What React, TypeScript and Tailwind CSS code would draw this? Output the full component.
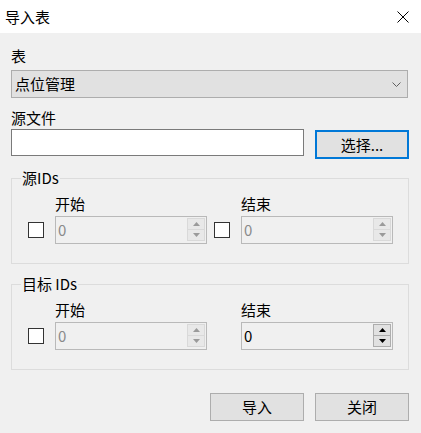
import React from "react";

function SpinBox({ enabled = false }: { enabled?: boolean }) {
  const btn = enabled
    ? "border-[#adadad] bg-[#e1e1e1]"
    : "border-[#d9d9d9] bg-[#e8e8e8]";
  const arrow = enabled ? "#000000" : "#9a9a9a";
  return (
    <div className="flex h-[28px] w-[152px] border border-[#b9b9b9] bg-[#f0f0f0]">
      <div
        className={`flex flex-1 items-center pl-[2px] text-[15px] leading-[20px] ${
          enabled ? "text-black" : "text-[#8a8a8a]"
        }`}
      >
        0
      </div>
      <div className="flex flex-col pt-[1px] pr-[1px]">
        <div className={`flex h-[12px] w-[18px] items-center justify-center border ${btn}`}>
          <svg width="7" height="4" viewBox="0 0 7 4">
            <polygon points="3.5,0 7,4 0,4" fill={arrow} />
          </svg>
        </div>
        <div className={`-mt-px flex h-[12px] w-[18px] items-center justify-center border ${btn}`}>
          <svg width="7" height="4" viewBox="0 0 7 4">
            <polygon points="0,0 7,0 3.5,4" fill={arrow} />
          </svg>
        </div>
      </div>
    </div>
  );
}

function CheckBox() {
  return <div className="h-[16px] w-[16px] border border-[#333333] bg-white" />;
}

function IdGroup({ title, endEnabled = false, endCheck = true }: { title: string; endEnabled?: boolean; endCheck?: boolean }) {
  return (
    <div className="relative h-[86px] w-[398px] border border-[#dcdcdc] pt-[15px] pl-[16px]">
      <span className="absolute -top-[11px] left-[9px] bg-[#f0f0f0] px-px text-[15px] leading-[20px]">
        {title}
      </span>
      <div className="flex text-[15px] leading-[20px]">
        <span className="ml-[27px] w-[186px]">开始</span>
        <span>结束</span>
      </div>
      <div className="mt-[2px] flex items-center">
        <CheckBox />
        <div className="ml-[11px]">
          <SpinBox />
        </div>
        <div className="ml-[7px] w-[16px]">{endCheck && <CheckBox />}</div>
        <div className="ml-[11px]">
          <SpinBox enabled={endEnabled} />
        </div>
      </div>
    </div>
  );
}

export default function App() {
  return (
    <div className="flex h-[433px] w-[421px] flex-col bg-[#f0f0f0] font-['Noto_Sans_CJK_SC','Microsoft_YaHei',sans-serif] text-black">
      {/* Title bar */}
      <div className="flex h-[33px] items-center justify-between bg-white pl-[5px] pr-[12px]">
        <span className="text-[15px] leading-[20px]">导入表</span>
        <svg width="12" height="12" viewBox="0 0 12 12" className="mt-[1px]">
          <path d="M0.5 0.5 L11.5 11.5 M11.5 0.5 L0.5 11.5" stroke="#000" strokeWidth="1" />
        </svg>
      </div>

      <div className="flex flex-col pl-[11px] pr-[12px]">
        <span className="mt-[13px] text-[15px] leading-[20px]">表</span>
        <div className="mt-[4px] flex h-[28px] w-[397px] items-center justify-between border border-[#adadad] bg-[#e1e1e1] pl-[3px] pr-[6px]">
          <span className="text-[15px] leading-[20px]">点位管理</span>
          <svg width="9" height="5" viewBox="0 0 9 5">
            <polyline points="0.5,0.5 4.5,4.5 8.5,0.5" fill="none" stroke="#606060" strokeWidth="1" />
          </svg>
        </div>

        <span className="mt-[10px] text-[15px] leading-[20px]">源文件</span>
        <div className="mt-[1px] flex h-[30px] items-start gap-[11px]">
          <div className="h-[27px] w-[293px] border border-[#7a7a7a] bg-white" />
          <button className="mt-[1px] flex h-[29px] w-[94px] items-center justify-center border-2 border-[#0078d7] bg-[#e1e1e1] text-[15px] leading-[20px]">
            选择...
          </button>
        </div>

        <div className="mt-[19px]">
          <IdGroup title="源IDs" />
        </div>
        <div className="mt-[20px]">
          <IdGroup title="目标 IDs" endEnabled endCheck={false} />
        </div>

        <div className="mt-[23px] flex justify-end gap-[11px]">
          <button className="h-[28px] w-[94px] border border-[#adadad] bg-[#e1e1e1] text-[15px] leading-[20px]">
            导入
          </button>
          <button className="h-[28px] w-[94px] border border-[#adadad] bg-[#e1e1e1] text-[15px] leading-[20px]">
            关闭
          </button>
        </div>
      </div>
    </div>
  );
}
